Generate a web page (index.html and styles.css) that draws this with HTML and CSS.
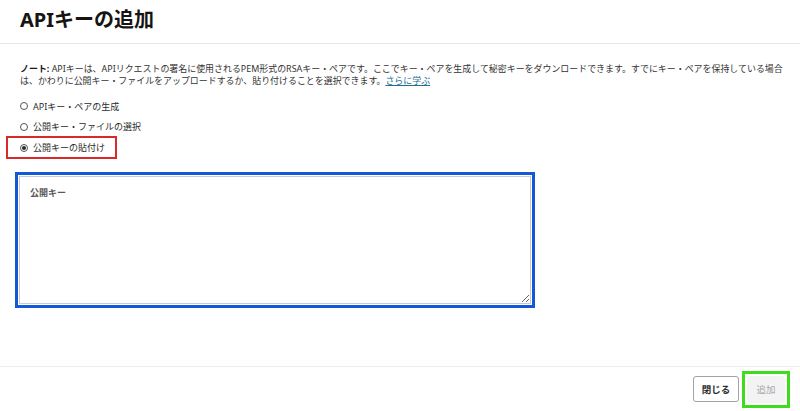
FILE: index.html
```html
<!DOCTYPE html>
<html lang="ja">
<head>
<meta charset="utf-8">
<title>APIキーの追加</title>
<link rel="stylesheet" href="styles.css">
</head>
<body>
<div class="page">
  <header class="header">
    <h1 class="title">APIキーの追加</h1>
  </header>
  <main class="content">
    <p class="note"><b>ノート:</b> APIキーは、APIリクエストの署名に使用されるPEM形式のRSAキー・ペアです。ここでキー・ペアを生成して秘密キーをダウンロードできます。すでにキー・ペアを保持している場合<br>は、かわりに公開キー・ファイルをアップロードするか、貼り付けることを選択できます。<a class="link" href="#">さらに学ぶ</a></p>
    <div class="radios">
      <label class="radio"><span class="circle"></span><span>APIキー・ペアの生成</span></label>
      <label class="radio"><span class="circle"></span><span>公開キー・ファイルの選択</span></label>
      <label class="radio radio-marked"><span class="circle checked"></span><span>公開キーの貼付け</span></label>
    </div>
    <div class="area-frame">
      <textarea class="area" placeholder="公開キー"></textarea>
    </div>
  </main>
  <footer class="footer">
    <button class="btn btn-close" type="button">閉じる</button>
    <div class="add-frame">
      <button class="btn btn-add" type="button" disabled>追加</button>
    </div>
  </footer>
</div>
</body>
</html>
```

FILE: styles.css
```css
* { box-sizing: border-box; }
html, body {
  margin: 0;
  padding: 0;
  background: #ffffff;
}
body {
  font-family: "Noto Sans", "Noto Sans CJK JP", sans-serif;
  color: #2b2b2b;
}
.page {
  height: 411px;
  display: flex;
  flex-direction: column;
}
.header {
  padding: 8px 20px 11px;
  border-bottom: 1px solid #e8e8e8;
}
.title {
  margin: 0;
  font-size: 20px;
  line-height: 24px;
  font-weight: 700;
  color: #161513;
}
.content {
  flex: 1;
  padding: 0 20px;
}
.note {
  margin: 19px 0 0;
  font-size: 8.95px;
  line-height: 12px;
  white-space: nowrap;
  color: #333333;
}
.note b {
  font-weight: 700;
  color: #161513;
}
.link {
  color: #1f6f95;
  text-decoration: underline;
}
.radios {
  margin-top: 9px;
  display: flex;
  flex-direction: column;
  align-items: flex-start;
}
.radio {
  display: flex;
  align-items: center;
  height: 20.5px;
  font-size: 9px;
  color: #2b2b2b;
}
.circle {
  width: 8px;
  height: 8px;
  border: 1px solid #555555;
  border-radius: 50%;
  margin-right: 5px;
  display: flex;
  align-items: center;
  justify-content: center;
}
.circle.checked::after {
  content: "";
  width: 4px;
  height: 4px;
  border-radius: 50%;
  background: #2b2b2b;
}
.radio-marked {
  margin-left: -14px;
  margin-top: -1px;
  width: 111px;
  height: 23px;
  padding-left: 12px;
  border: 2px solid #d92a2a;
}
.area-frame {
  margin-top: 13px;
  margin-left: -5px;
  width: 520px;
  height: 136px;
  border: 3px solid #1558d6;
  padding: 1px;
}
.area {
  display: block;
  width: 100%;
  height: 100%;
  border: 1px solid #c9c9cf;
  border-radius: 0;
  padding: 9px 10px;
  font-family: "Noto Sans", "Noto Sans CJK JP", sans-serif;
  font-size: 9px;
  outline: none;
  background: #ffffff;
}
.area::placeholder {
  color: #5a5a5a;
  font-weight: 700;
}
.footer {
  height: 45px;
  border-top: 1px solid #ececec;
  display: flex;
  justify-content: flex-end;
  align-items: center;
  gap: 3px;
  padding-right: 10px;
}
.btn {
  font-family: "Noto Sans", "Noto Sans CJK JP", sans-serif;
  font-size: 9.5px;
  font-weight: 700;
  border-radius: 3px;
  padding: 0;
}
.btn-close {
  width: 46px;
  height: 26px;
  background: #ffffff;
  border: 1px solid #a3a3a3;
  color: #2b2b2b;
}
.add-frame {
  border: 3px solid #3fdc1e;
  padding: 2px;
}
.btn-add {
  display: block;
  width: 38px;
  height: 27px;
  background: #f3f3f3;
  border: none;
  color: #a8a8a8;
  font-weight: 400;
}
```
